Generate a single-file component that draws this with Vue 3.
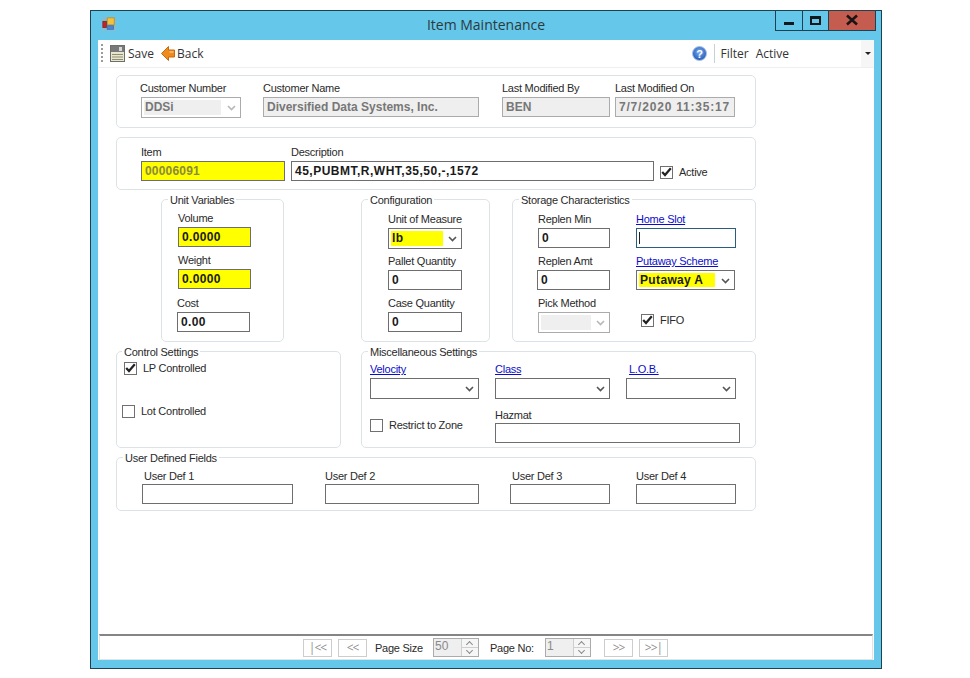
<script setup>
const pagerStart = ['|<<', '<<']
const pagerEnd = ['>>', '>>|']
</script>

<template>
  <div class="window">
    <header class="titlebar">
      <svg class="app-icon" width="14" height="14" viewBox="0 0 16 16">
        <rect x="0" y="0" width="16" height="16" fill="#9fb4bd" opacity=".55" />
        <rect x="6" y="1" width="8" height="8" fill="#f3c23d" stroke="#b9902a" />
        <rect x="1" y="5" width="4" height="7" fill="#c8202a" stroke="#7d2a2a" />
        <rect x="6" y="10" width="7" height="4" fill="#4a86dc" stroke="#3d6cae" />
      </svg>
      <span class="title">Item Maintenance</span>
      <div class="controls">
        <button class="ctl ctl-min"><i></i></button>
        <button class="ctl ctl-max"><i></i></button>
        <button class="ctl ctl-close">
          <svg width="14" height="12" viewBox="0 0 14 12"><path d="M2 1.5 L12 10.5 M12 1.5 L2 10.5" stroke="#1c1414" stroke-width="2.6" /></svg>
        </button>
      </div>
    </header>

    <main class="client">
      <nav class="toolbar">
        <span class="grip"></span>
        <svg class="ico-save" width="15" height="17" viewBox="0 0 15 17">
          <rect x=".5" y=".5" width="14" height="16" fill="#e9e6cf" stroke="#6f6f6a" />
          <rect x="1" y="1" width="13" height="6" fill="#77797b" />
          <rect x="9" y="2" width="3" height="4" fill="#d8d8d8" />
          <path d="M2 9.5H13M2 12H13M2 14.5H13" stroke="#8f8d74" />
        </svg>
        <span class="tool-text save-text">Save</span>
        <svg class="ico-back" width="14" height="15" viewBox="0 0 14 15">
          <path d="M0.5 7.5 L7.5 0.5 V4 H13.5 V11 H7.5 V14.5 Z" fill="#ef8a1d" stroke="#c8690e" />
          <path d="M8.5 5 H12.5 V7 H8.5 Z" fill="#f8b465" />
        </svg>
        <span class="tool-text">Back</span>
        <span class="tool-spring"></span>
        <svg class="ico-help" width="15" height="15" viewBox="0 0 15 15">
          <defs>
            <radialGradient id="hb" cx="50%" cy="40%" r="60%">
              <stop offset="0" stop-color="#7fb0ef" />
              <stop offset="1" stop-color="#1f58b6" />
            </radialGradient>
          </defs>
          <circle cx="7.5" cy="7.5" r="7" fill="url(#hb)" stroke="#a9c3e6" />
          <text x="7.5" y="11.5" text-anchor="middle" class="help-q">?</text>
        </svg>
        <span class="tool-sep"></span>
        <span class="tool-text filter">Filter</span>
        <span class="tool-text active-val">Active</span>
        <span class="tool-drop"><i></i></span>
      </nav>

      <div class="form">
        <section class="panel p-head">
          <div class="f"><label class="nudge-l">Customer Number</label>
            <div class="combo dis w100"><span class="fill fill-cust val-dis">DDSi</span><svg class="chev" width="9" height="6" viewBox="0 0 9 6"><path d="M1 1l3.5 3.5L8 1" fill="none" stroke="#b8b8b8" stroke-width="1.6" /></svg></div>
          </div>
          <div class="f"><label>Customer Name</label><div class="box dis w216 val-dis">Diversified Data Systems, Inc.</div></div>
          <div class="f"><label>Last Modified By</label><div class="box dis w108 val-dis">BEN</div></div>
          <div class="f"><label>Last Modified On</label><div class="box dis w120 val-dis val-time">7/7/2020 11:35:17 AM</div></div>
        </section>

        <section class="panel p-item">
          <div class="f"><label>Item</label><div class="box yellow w144 val-item">00006091</div></div>
          <div class="f"><label>Description</label><div class="box w363 val val-desc">45,PUBMT,R,WHT,35,50,-,1572</div></div>
          <label class="check item-active"><span class="cb on"><svg width="11" height="10" viewBox="0 0 11 10"><path d="M1.2 5l2.8 3L9.8 1.2" fill="none" stroke="#222" stroke-width="2.2" /></svg></span>Active</label>
        </section>

        <div class="row-3">
          <fieldset class="group g-unit">
            <legend>Unit Variables</legend>
            <div class="f"><label>Volume</label><div class="box yellow w73 val">0.0000</div></div>
            <div class="f"><label>Weight</label><div class="box yellow w73 val">0.0000</div></div>
            <div class="f shift"><label>Cost</label><div class="box w73 val">0.00</div></div>
          </fieldset>

          <fieldset class="group g-config">
            <legend>Configuration</legend>
            <div class="f"><label>Unit of Measure</label>
              <div class="combo w74"><span class="fill fill-uom val">lb</span><svg class="chev" width="9" height="6" viewBox="0 0 9 6"><path d="M1 1l3.5 3.5L8 1" fill="none" stroke="#555" stroke-width="1.6" /></svg></div>
            </div>
            <div class="f"><label>Pallet Quantity</label><div class="box w74 val">0</div></div>
            <div class="f"><label>Case Quantity</label><div class="box w74 val">0</div></div>
          </fieldset>

          <fieldset class="group g-storage">
            <legend>Storage Characteristics</legend>
            <div class="f"><label>Replen Min</label><div class="box w72 val">0</div></div>
            <div class="f"><label class="link">Home Slot</label><div class="box w100 focus"><span class="caret"></span></div></div>
            <div class="f"><label>Replen Amt</label><div class="box w73 val shift-box">0</div></div>
            <div class="f"><label class="link">Putaway Scheme</label>
              <div class="combo w99 h20"><span class="fill fill-put val">Putaway A</span><svg class="chev" width="9" height="6" viewBox="0 0 9 6"><path d="M1 1l3.5 3.5L8 1" fill="none" stroke="#555" stroke-width="1.6" /></svg></div>
            </div>
            <div class="f"><label>Pick Method</label>
              <div class="combo dis w72"><span class="fill fill-pick"></span><svg class="chev" width="9" height="6" viewBox="0 0 9 6"><path d="M1 1l3.5 3.5L8 1" fill="none" stroke="#b8b8b8" stroke-width="1.6" /></svg></div>
            </div>
            <label class="check fifo"><span class="cb on"><svg width="11" height="10" viewBox="0 0 11 10"><path d="M1.2 5l2.8 3L9.8 1.2" fill="none" stroke="#222" stroke-width="2.2" /></svg></span>FIFO</label>
          </fieldset>
        </div>

        <div class="row-4">
          <fieldset class="group g-control">
            <legend>Control Settings</legend>
            <label class="check lp"><span class="cb on"><svg width="11" height="10" viewBox="0 0 11 10"><path d="M1.2 5l2.8 3L9.8 1.2" fill="none" stroke="#222" stroke-width="2.2" /></svg></span>LP Controlled</label>
            <label class="check lot"><span class="cb"></span>Lot Controlled</label>
          </fieldset>

          <fieldset class="group g-misc">
            <legend>Miscellaneous Settings</legend>
            <div class="misc-top">
              <div class="f"><label class="link">Velocity</label>
                <div class="combo w109"><svg class="chev" width="9" height="6" viewBox="0 0 9 6"><path d="M1 1l3.5 3.5L8 1" fill="none" stroke="#555" stroke-width="1.6" /></svg></div>
              </div>
              <div class="f"><label class="link">Class</label>
                <div class="combo w115"><svg class="chev" width="9" height="6" viewBox="0 0 9 6"><path d="M1 1l3.5 3.5L8 1" fill="none" stroke="#555" stroke-width="1.6" /></svg></div>
              </div>
              <div class="f"><label class="link lob">L.O.B.</label>
                <div class="combo w110"><svg class="chev" width="9" height="6" viewBox="0 0 9 6"><path d="M1 1l3.5 3.5L8 1" fill="none" stroke="#555" stroke-width="1.6" /></svg></div>
              </div>
            </div>
            <div class="misc-bottom">
              <label class="check restrict"><span class="cb"></span>Restrict to Zone</label>
              <div class="f tight"><label>Hazmat</label><div class="box w245"></div></div>
            </div>
          </fieldset>
        </div>

        <fieldset class="group g-user">
          <legend>User Defined Fields</legend>
          <div class="f tight"><label class="nudge-r">User Def 1</label><div class="box w151"></div></div>
          <div class="f tight"><label>User Def 2</label><div class="box w154"></div></div>
          <div class="f tight"><label class="nudge-r">User Def 3</label><div class="box w100"></div></div>
          <div class="f tight"><label>User Def 4</label><div class="box w100"></div></div>
        </fieldset>
      </div>

      <footer class="pager">
        <button v-for="b in pagerStart" :key="b" class="pg-btn">{{ b }}</button>
        <span class="pg-label pg-size">Page Size</span>
        <div class="spin"><span>50</span><div class="spin-btns"><i class="up"></i><i class="down"></i></div></div>
        <span class="pg-label pg-no">Page No:</span>
        <div class="spin"><span>1</span><div class="spin-btns"><i class="up"></i><i class="down"></i></div></div>
        <button v-for="b in pagerEnd" :key="b" class="pg-btn pg-end">{{ b }}</button>
      </footer>
    </main>
  </div>
</template>

<style>
html, body { margin: 0; background: #fff; }
</style>

<style scoped>
.window {
  box-sizing: border-box;
  width: 792px;
  height: 659px;
  margin: 10px 0 0 90px;
  background: #65c7e9;
  border: 1px solid #1e4250;
  display: flex;
  flex-direction: column;
  font-family: "Liberation Sans", Arial, sans-serif;
  font-size: 11px;
  letter-spacing: -.25px;
  color: #2a2a2a;
  overflow: hidden;
}
.titlebar {
  position: relative;
  height: 29px;
  flex: none;
  display: flex;
  align-items: center;
  justify-content: center;
}
.app-icon { position: absolute; left: 11px; top: 6px; }
.title { font-family: "Open Sans", sans-serif; font-size: 14px; letter-spacing: 0; color: #2c3a40; margin-top: -2px; }
.controls {
  position: absolute;
  right: 5px;
  top: -1px;
  display: flex;
  height: 21px;
  border: 1px solid #1e4250;
  border-top: 0;
  box-sizing: border-box;
}
.ctl {
  border: 0;
  padding: 0;
  background: none;
  width: 27px;
  display: flex;
  align-items: center;
  justify-content: center;
  border-right: 1px solid #1e4250;
}
.ctl-max { width: 26px; }
.ctl-close { width: 46px; background: #c45d50; border-right: 0; }
.ctl-min i { display: block; width: 10px; height: 3px; margin-top: 6px; background: #12181c; }
.ctl-max i { display: block; box-sizing: border-box; width: 11px; height: 9px; border: 2px solid #12181c; border-top-width: 3px; }

.client {
  flex: 1;
  margin: 0 7px 8px 7px;
  background: #fff;
  display: flex;
  flex-direction: column;
  min-height: 0;
}
.toolbar {
  flex: none;
  height: 28px;
  box-sizing: border-box;
  border-bottom: 1px solid #eef0f0;
  display: flex;
  align-items: center;
  font-family: "Open Sans", sans-serif;
  letter-spacing: 0;
}
.grip {
  width: 2px;
  height: 20px;
  margin-left: 3px;
  background: repeating-linear-gradient(#9a9a9a 0 2px, transparent 2px 4px);
}
.ico-save { margin-left: 7px; }
.tool-text { font-size: 12px; color: #333; }
.save-text { margin-left: 3px; margin-right: 7px; }
.ico-back { margin-right: 2px; }
.tool-spring { flex: 1; }
.help-q { font: bold 11px "Liberation Sans", sans-serif; fill: #fff; }
.tool-sep { width: 1px; height: 19px; background: #c8d0d4; margin: 0 5px 0 7px; }
.active-val { margin-left: 7px; }
.tool-drop {
  width: 13px;
  height: 27px;
  margin-left: 72px;
  background: #f6f6f6;
  display: flex;
  align-items: center;
  justify-content: center;
}
.tool-drop i {
  width: 0;
  height: 0;
  border: 3px solid transparent;
  border-top: 3px solid #222;
  border-bottom: 0;
}

.form {
  flex: 1;
  width: 640px;
  margin: 7px 0 0 18px;
  display: flex;
  flex-direction: column;
  gap: 9px;
}
.panel, .group {
  box-sizing: border-box;
  border: 1px solid #dce3e6;
  border-radius: 5px;
  margin: 0;
  min-width: 0;
}
.group { position: relative; padding: 0; }
.group legend {
  position: absolute;
  top: -7px;
  left: 6px;
  background: #fff;
  padding: 0 2px;
  line-height: 14px;
  white-space: nowrap;
}
.g-control legend { left: 5px; }
label { display: block; line-height: 14px; height: 14px; white-space: nowrap; }
.link { color: #0c0ccc; text-decoration: underline; }
.f { display: flex; flex-direction: column; align-items: flex-start; gap: 2px; }
.f.tight { gap: 1px; }
.box, .combo {
  box-sizing: border-box;
  height: 20px;
  border: 1px solid #6e6e6e;
  background: #fff;
  flex: none;
  position: relative;
}
.box { padding: 0 3px; line-height: 18px; overflow: hidden; white-space: nowrap; }
.combo { height: 21px; }
.combo.h20 { height: 20px; }
.dis { background: #efefef; border-color: #ababab; }
.combo.dis { background: #fff; }
.yellow { background: #ffff00; }
.focus { border-color: #2a5d80; }
.caret { position: absolute; left: 2px; top: 3px; width: 1px; height: 12px; background: #222; }
.val { font-size: 12px; font-weight: 700; color: #1a1a1a; letter-spacing: .35px; }
.val-desc { letter-spacing: .5px; }
.val-dis { font-size: 12px; font-weight: 700; color: #777; letter-spacing: 0; }
.val-time { letter-spacing: .8px; }
.val-item { font-size: 12px; font-weight: 700; color: #8a8a3c; letter-spacing: .2px; }
.fill {
  position: absolute;
  left: 2px;
  top: 2px;
  bottom: 2px;
  line-height: 15px;
  padding-left: 1px;
  overflow: hidden;
  white-space: nowrap;
}
.fill-cust { width: 76px; background: #efefef; }
.fill-uom { width: 51px; background: #ffff00; }
.fill-put { width: 75px; background: #ffff00; }
.fill-pick { width: 49px; background: #efefef; }
.chev { position: absolute; right: 4px; top: 7px; }
.w72 { width: 72px; } .w73 { width: 73px; } .w74 { width: 74px; } .w99 { width: 99px; }
.w100 { width: 100px; } .w108 { width: 108px; } .w109 { width: 109px; } .w110 { width: 110px; }
.w115 { width: 115px; } .w120 { width: 120px; } .w144 { width: 144px; } .w151 { width: 151px; }
.w154 { width: 154px; } .w216 { width: 216px; } .w245 { width: 245px; } .w363 { width: 363px; }

.p-head {
  height: 53px;
  padding: 5px 0 0 24px;
  display: grid;
  grid-template-columns: 122px 239px 113px 120px;
}
.nudge-l { margin-left: -1px; }
.nudge-r { margin-left: 2px; }
.p-item {
  height: 53px;
  padding: 7px 0 0 24px;
  display: grid;
  grid-template-columns: 150px 369px auto;
}
.check { display: flex; align-items: center; gap: 6px; height: 14px; }
.cb {
  box-sizing: border-box;
  width: 13px;
  height: 13px;
  border: 1px solid #707070;
  background: #fff;
  display: flex;
  align-items: center;
  justify-content: center;
  flex: none;
}
.item-active { margin-top: 20px; }

.row-3 { display: flex; height: 143px; }
.g-unit {
  width: 123px;
  margin-left: 45px;
  padding: 11px 0 0 16px;
  display: grid;
  grid-template-rows: 42px 43px auto;
}
.shift { margin-left: -1px; }
.g-config {
  width: 129px;
  margin-left: 77px;
  padding: 12px 0 0 26px;
  display: grid;
  grid-template-rows: repeat(3, 42px);
}
.g-storage {
  width: 244px;
  margin-left: 22px;
  padding: 12px 0 0 25px;
  display: grid;
  grid-template-columns: 98px 1fr;
  grid-template-rows: repeat(3, 42px);
}
.shift-box { margin-left: -1px; }
.fifo { margin: 17px 0 0 5px; }

.row-4 { display: flex; height: 97px; }
.g-control { width: 225px; padding: 9px 0 0 7px; display: flex; flex-direction: column; }
.lot { margin: 29px 0 0 -2px; }
.g-misc { width: 395px; margin-left: 20px; padding: 10px 0 0 8px; }
.misc-top { display: grid; grid-template-columns: 125px 131px auto; }
.lob { margin-left: 3px; }
.misc-bottom { display: grid; grid-template-columns: 125px auto; margin-top: 9px; }
.restrict { margin-top: 10px; }

.g-user {
  height: 54px;
  padding: 11px 0 0 25px;
  display: grid;
  grid-template-columns: 183px 185px 126px auto;
}

.pager {
  flex: none;
  height: 26px;
  box-sizing: border-box;
  margin: 0 1px;
  border-top: 2px solid #858585;
  border-bottom: 1px solid #dfe5e7;
  border-left: 1px solid #dfe5e7;
  border-right: 1px solid #dfe5e7;
  display: flex;
  align-items: center;
  padding-left: 203px;
}
.pg-btn {
  width: 29px;
  height: 18px;
  padding: 0;
  margin-right: 6px;
  border: 1px solid #cdcdcd;
  background: #fff;
  color: #8f8f8f;
  font: 12px "Open Sans", sans-serif;
  letter-spacing: -1px;
  line-height: 14px;
}
.pg-btn:nth-last-child(2) { margin-left: 13px; }
.pg-label { color: #2a2a2a; flex: none; }
.pg-size { width: 58px; margin-left: 2px; }
.pg-no { width: 55px; margin-left: 11px; }
.spin {
  box-sizing: border-box;
  width: 46px;
  height: 19px;
  background: #efefef;
  border: 1px solid #ababab;
  display: flex;
  justify-content: space-between;
  color: #8a8a8a;
  line-height: 14px;
  padding-left: 1px;
  font-size: 12px;
  letter-spacing: 0;
}
.spin-btns {
  width: 16px;
  display: flex;
  flex-direction: column;
  background: #f6f6f6;
  border-left: 1px solid #cfcfcf;
}
.spin-btns i { flex: 1; position: relative; }
.spin-btns i + i { border-top: 1px solid #cfcfcf; }
.spin-btns i::after {
  content: "";
  position: absolute;
  left: 5px;
  width: 4px;
  height: 4px;
  border-left: 1px solid #8a8a8a;
  border-top: 1px solid #8a8a8a;
  transform: rotate(45deg);
  top: 3px;
}
.spin-btns .down::after { transform: rotate(225deg); top: 0; }
</style>
